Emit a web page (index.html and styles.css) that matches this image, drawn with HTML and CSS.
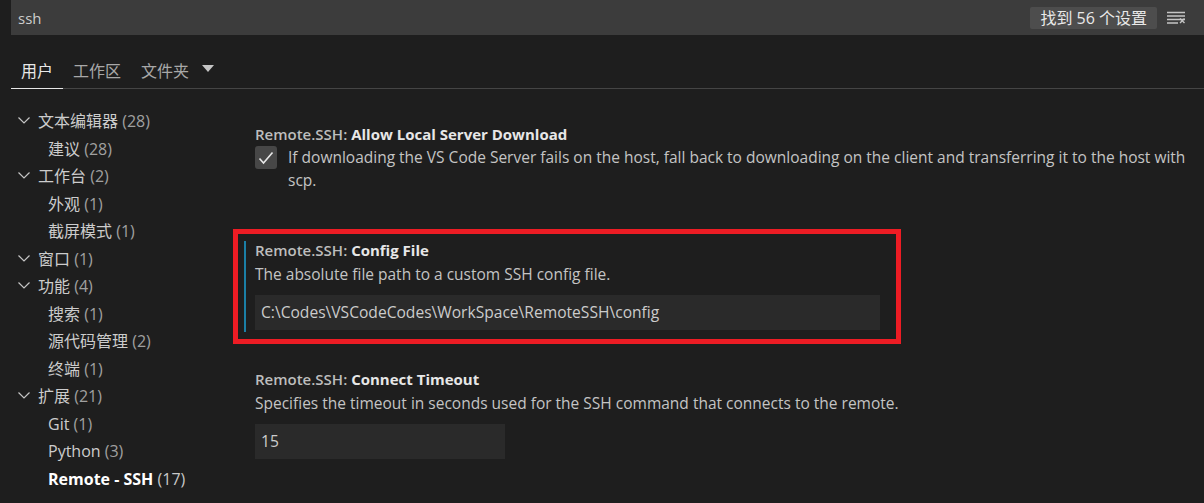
FILE: index.html
```html
<!DOCTYPE html>
<html lang="zh-CN">
<head>
<meta charset="utf-8">
<title>Settings</title>
<link rel="stylesheet" href="styles.css">
</head>
<body>
<div class="page">
  <div class="search">
    <span class="search-text">ssh</span>
    <span class="search-tools">
      <span class="badge">找到 56 个设置</span>
      <svg class="clear-icon" width="18" height="14" viewBox="0 0 18 14">
        <path d="M0 1.5H18M0 5H18M0 8.5H18M0 12H11" stroke="#c5c5c5" stroke-width="1.3" fill="none"/>
        <path d="M13 7.5L17.5 12M17.5 7.5L13 12" stroke="#c5c5c5" stroke-width="1.4" fill="none"/>
      </svg>
    </span>
  </div>

  <div class="tabs">
    <span class="tab active">用户</span>
    <span class="tab">工作区</span>
    <span class="tab">文件夹</span>
    <svg class="tab-caret" width="12" height="7" viewBox="0 0 12 7"><path d="M0 0H12L6 7Z" fill="#c5c5c5"/></svg>
  </div>

  <div class="body">
    <ul class="tree">
      <li class="row l1"><svg class="chev" width="12" height="7" viewBox="0 0 12 7"><path d="M0.5 0.5L6 6L11.5 0.5" stroke="#c5c5c5" stroke-width="1.2" fill="none"/></svg>文本编辑器 <span class="count">(28)</span></li>
      <li class="row l2">建议 <span class="count">(28)</span></li>
      <li class="row l1"><svg class="chev" width="12" height="7" viewBox="0 0 12 7"><path d="M0.5 0.5L6 6L11.5 0.5" stroke="#c5c5c5" stroke-width="1.2" fill="none"/></svg>工作台 <span class="count">(2)</span></li>
      <li class="row l2">外观 <span class="count">(1)</span></li>
      <li class="row l2">截屏模式 <span class="count">(1)</span></li>
      <li class="row l1"><svg class="chev" width="12" height="7" viewBox="0 0 12 7"><path d="M0.5 0.5L6 6L11.5 0.5" stroke="#c5c5c5" stroke-width="1.2" fill="none"/></svg>窗口 <span class="count">(1)</span></li>
      <li class="row l1"><svg class="chev" width="12" height="7" viewBox="0 0 12 7"><path d="M0.5 0.5L6 6L11.5 0.5" stroke="#c5c5c5" stroke-width="1.2" fill="none"/></svg>功能 <span class="count">(4)</span></li>
      <li class="row l2">搜索 <span class="count">(1)</span></li>
      <li class="row l2">源代码管理 <span class="count">(2)</span></li>
      <li class="row l2">终端 <span class="count">(1)</span></li>
      <li class="row l1"><svg class="chev" width="12" height="7" viewBox="0 0 12 7"><path d="M0.5 0.5L6 6L11.5 0.5" stroke="#c5c5c5" stroke-width="1.2" fill="none"/></svg>扩展 <span class="count">(21)</span></li>
      <li class="row l2">Git <span class="count">(1)</span></li>
      <li class="row l2">Python <span class="count">(3)</span></li>
      <li class="row l2 selected"><b>Remote - SSH</b> <span class="count">(17)</span></li>
    </ul>

    <div class="settings">
      <div class="setting s1">
        <div class="title"><span class="prefix">Remote.SSH: </span><b>Allow Local Server Download</b></div>
        <div class="check-row">
          <span class="checkbox"><svg width="16" height="14" viewBox="0 0 16 14"><path d="M1.5 7.5L5.5 12L14.5 1.5" stroke="#e8e8e8" stroke-width="1.6" fill="none"/></svg></span>
          <div class="desc">If downloading the VS Code Server fails on the host, fall back to downloading on the client and transferring it to the host with<br>scp.</div>
        </div>
      </div>

      <div class="setting s2 focused">
        <div class="title"><span class="prefix">Remote.SSH: </span><b>Config File</b></div>
        <div class="desc">The absolute file path to a custom SSH config file.</div>
        <div class="input wide">C:\Codes\VSCodeCodes\WorkSpace\RemoteSSH\config</div>
        <div class="highlight"></div>
      </div>

      <div class="setting s3">
        <div class="title"><span class="prefix">Remote.SSH: </span><b>Connect Timeout</b></div>
        <div class="desc">Specifies the timeout in seconds used for the SSH command that connects to the remote.</div>
        <div class="input narrow">15</div>
      </div>
    </div>
  </div>
</div>
</body>
</html>
```

FILE: styles.css
```css
* { box-sizing: border-box; }
html, body { margin: 0; padding: 0; }
body {
  background: #1e1e1e;
  color: #cccccc;
  font-family: "Segoe UI", "Open Sans", "Noto Sans CJK SC", sans-serif;
  font-size: 15px;
  width: 1204px;
  height: 503px;
  overflow: hidden;
}
.page { padding-left: 11px; }

.search {
  height: 35px;
  background: #3c3c3c;
  display: flex;
  align-items: center;
  justify-content: space-between;
  padding: 0 19px 0 7px;
}
.search-text { color: #cccccc; font-size: 15px; }
.search-tools { display: flex; align-items: center; }
.badge {
  background: #4d4d4d;
  color: #e8e8e8;
  font-size: 16px;
  line-height: 22px;
  height: 22px;
  padding: 0 10px;
  border-radius: 2px;
  margin-right: 10px;
}
.clear-icon { display: block; }

.tabs {
  height: 54px;
  display: flex;
  align-items: flex-end;
  border-bottom: 1px solid #454545;
}
.tab {
  font-size: 16px;
  color: #a8a8a8;
  padding: 0 10px;
  height: 36px;
  line-height: 36px;
  margin-bottom: -1px;
  border-bottom: 1px solid transparent;
}
.tab.active { color: #e7e7e7; border-bottom-color: #e7e7e7; }
.tab-caret { margin: 0 0 16px 3px; }

.body { display: flex; }
.tree {
  list-style: none;
  margin: 0;
  padding: 19px 0 0 0;
  width: 233px;
  flex: none;
}
.row {
  height: 27.5px;
  line-height: 27.5px;
  font-size: 16px;
  color: #cccccc;
  white-space: nowrap;
}
.row.l1 { padding-left: 7px; }
.row.l2 { padding-left: 37px; }
.chev { margin-right: 8px; vertical-align: middle; position: relative; top: -2px; }
.count { color: #a0a0a0; }
.row.selected b { color: #ffffff; font-weight: 700; }
.row.selected .count { color: #c8c8c8; }

.settings { flex: 1; padding-top: 36px; }
.setting {
  position: relative;
  border-left: 2px solid transparent;
  padding-left: 9px;
  padding-right: 8px;
}
.setting.focused { border-left-color: #1b7fa6; }
.title {
  line-height: 18px;
  font-size: 15px;
  color: #e7e7e7;
}
.title .prefix { color: #bdbdbd; font-weight: 600; }
.title b { font-weight: 700; }
.desc {
  line-height: 23px;
  color: #c4c4c4;
  font-size: 15.5px;
  white-space: nowrap;
}
.check-row { display: flex; align-items: flex-start; margin-top: 3px; }
.checkbox {
  width: 22px;
  height: 23px;
  background: #474747;
  border-radius: 3px;
  display: flex;
  align-items: center;
  justify-content: center;
  margin-right: 11px;
  flex: none;
}
.s1 { margin-bottom: 49px; }
.s2 { padding-bottom: 2px; margin-bottom: 38px; }
.s2 .desc, .s3 .desc { margin-top: 4px; }
.input {
  height: 35px;
  line-height: 35px;
  background: #2a2a2a;
  color: #cccccc;
  padding-left: 6px;
  font-size: 15.6px;
  margin-top: 9px;
}
.input.wide { width: 625px; }
.input.narrow { width: 250px; }
.highlight {
  position: absolute;
  left: -13px;
  top: -12px;
  width: 668px;
  height: 115px;
  border: 5px solid #ed1c24;
  pointer-events: none;
}
```
